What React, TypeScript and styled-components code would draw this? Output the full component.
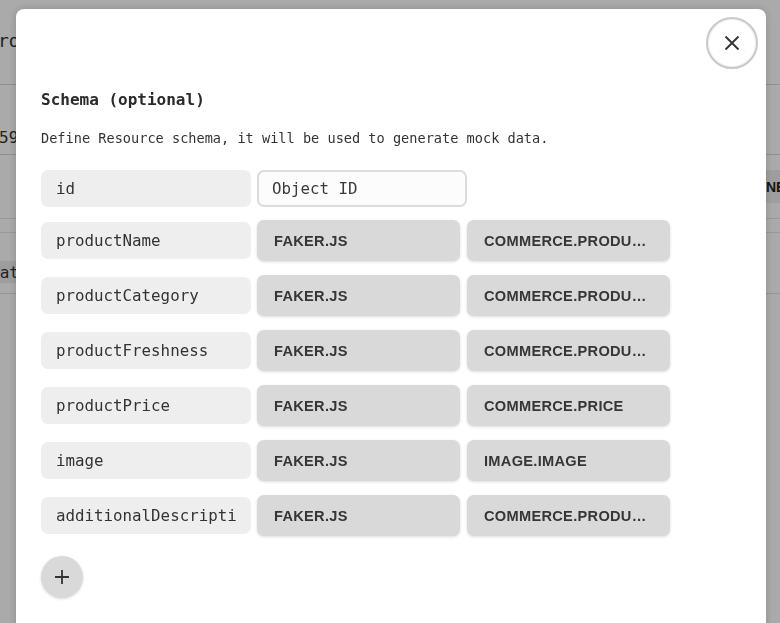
import React from "react";
import styled, { createGlobalStyle } from "styled-components";

const Global = createGlobalStyle`
  html, body { margin: 0; padding: 0; overflow: hidden; background: #fff; }
  body { font-family: "Liberation Sans", Arial, sans-serif; }
  * { box-sizing: border-box; }
`;

const mono = `"DejaVu Sans Mono", "Liberation Mono", monospace`;

/* ---------- background page ---------- */
const BgPage = styled.div`
  width: 780px;
  height: 623px;
  display: flex;
  flex-direction: column;
  background: #fff;
  overflow: hidden;
`;

const BgHeader = styled.div`
  height: 85px;
  border-bottom: 1px solid #d6d6d6;
  display: flex;
  align-items: center;
  font-family: ${mono};
  font-size: 18px;
  color: #333;
  padding-bottom: 4px;
  margin-left: -2px;
`;

const BgIdRow = styled.div`
  height: 70px;
  border-bottom: 1px solid #d6d6d6;
  display: flex;
  align-items: flex-end;
  padding-bottom: 7px;
  font-family: ${mono};
  font-size: 16px;
  color: #333;
  margin-left: -1px;
`;

const Red = styled.span`
  color: #a33;
`;

const BgToolbar = styled.div`
  height: 64px;
  border-bottom: 1px solid #e4e4e4;
  display: grid;
  grid-template-columns: 760px 1fr;
  align-items: center;
`;

const BgNewBtn = styled.div`
  height: 33px;
  background: #eee;
  display: flex;
  align-items: center;
  padding-left: 6px;
  font-weight: 700;
  font-size: 14px;
  color: #222;
  white-space: nowrap;
`;

const BgTabs = styled.div`
  height: 14px;
  border-bottom: 1px solid #e4e4e4;
`;

const BgDataRow = styled.div`
  margin-top: 28px;
  height: 22px;
  width: 40px;
  background: #ececec;
  display: flex;
  align-items: center;
  font-family: ${mono};
  font-size: 16px;
  color: #333;
  margin-left: -10px;
`;

const BgLine = styled.div`
  margin-top: 10px;
  height: 1px;
  background: #e0e0e0;
`;

/* ---------- overlay + modal ---------- */
const Overlay = styled.div`
  position: fixed;
  inset: 0;
  background: rgba(0, 0, 0, 0.335);
`;

const Modal = styled.div`
  position: absolute;
  top: 9px;
  left: 16px;
  width: 750px;
  height: 700px;
  background: #fff;
  border-radius: 8px;
  box-shadow: 0 0 8px rgba(0, 0, 0, 0.18);
  padding: 81px 25px 0 25px;
`;

const CloseButton = styled.button`
  position: absolute;
  top: 8px;
  right: 8px;
  width: 52px;
  height: 52px;
  border-radius: 50%;
  border: 2px solid #c9c9c9;
  box-shadow: inset 0 0 0 1px #f0f0f0;
  background: #fff;
  display: flex;
  align-items: center;
  justify-content: center;
  padding: 0;
  cursor: pointer;
`;

const Title = styled.h2`
  margin: 0;
  font-family: ${mono};
  font-size: 16px;
  font-weight: 700;
  line-height: 20px;
  color: #2a2a2a;
`;

const Description = styled.p`
  margin: 18px 0 0 0;
  font-family: ${mono};
  font-size: 13.6px;
  line-height: 20px;
  color: #333;
`;

const Rows = styled.div`
  margin-top: 22px;
  display: flex;
  flex-direction: column;
  gap: 14px;
`;

const Row = styled.div<{ $first?: boolean }>`
  display: flex;
  align-items: center;
  gap: 6px;
  height: ${(p) => (p.$first ? "37px" : "41px")};
  margin-bottom: ${(p) => (p.$first ? "-1px" : "0")};
`;

const NameField = styled.input`
  width: 210px;
  height: 37px;
  border: none;
  outline: none;
  border-radius: 7px;
  background: #eeeeee;
  padding: 0 14px 0 15px;
  font-family: ${mono};
  font-size: 15.8px;
  color: #333;
`;

const TypeField = styled.input`
  width: 210px;
  height: 37px;
  border: 2px solid #dcdcdc;
  outline: none;
  border-radius: 7px;
  background: #fcfcfc;
  padding: 0 12px 0 13px;
  font-family: ${mono};
  font-size: 15.8px;
  color: #3a3a3a;
`;

const PickButton = styled.button<{ $gapLeft?: boolean }>`
  width: 203px;
  height: 41px;
  border: none;
  border-radius: 7px;
  background: #d9d9d9;
  box-shadow: 0 1px 3px rgba(0, 0, 0, 0.14);
  padding: 0 17px;
  margin-left: ${(p) => (p.$gapLeft ? "1px" : "0")};
  font-family: "Liberation Sans", Arial, sans-serif;
  font-weight: 700;
  font-size: 14.6px;
  letter-spacing: 0.3px;
  color: #363636;
  text-align: left;
  text-transform: uppercase;
  white-space: nowrap;
  overflow: hidden;
  text-overflow: ellipsis;
  cursor: pointer;
`;

const AddButton = styled.button`
  margin-top: 20px;
  width: 42px;
  height: 42px;
  border-radius: 50%;
  border: none;
  background: #d9d9d9;
  box-shadow: 0 1px 3px rgba(0, 0, 0, 0.15);
  display: flex;
  align-items: center;
  justify-content: center;
  padding: 0;
  cursor: pointer;
`;

const fields = [
  { name: "productName", method: "commerce.productName" },
  { name: "productCategory", method: "commerce.productAdjective" },
  { name: "productFreshness", method: "commerce.productMaterial" },
  { name: "productPrice", method: "commerce.price" },
  { name: "image", method: "image.image" },
  { name: "additionalDescription", method: "commerce.productDescription" },
];

export default function App() {
  return (
    <>
      <Global />
      <BgPage>
        <BgHeader>roject</BgHeader>
        <BgIdRow>
          59<Red>c</Red>
        </BgIdRow>
        <BgToolbar>
          <span />
          <BgNewBtn>NEW RESOURCE</BgNewBtn>
        </BgToolbar>
        <BgTabs />
        <BgDataRow>data</BgDataRow>
        <BgLine />
      </BgPage>
      <Overlay>
        <Modal>
          <CloseButton aria-label="Close">
            <svg width="16" height="16" viewBox="0 0 16 16">
              <path
                d="M1.5 1.5 L14.5 14.5 M14.5 1.5 L1.5 14.5"
                stroke="#333"
                strokeWidth="1.9"
                strokeLinecap="butt"
                fill="none"
              />
            </svg>
          </CloseButton>
          <Title>Schema (optional)</Title>
          <Description>
            Define Resource schema, it will be used to generate mock data.
          </Description>
          <Rows>
            <Row $first>
              <NameField readOnly value="id" />
              <TypeField readOnly value="Object ID" />
            </Row>
            {fields.map((f) => (
              <Row key={f.name}>
                <NameField readOnly value={f.name} />
                <PickButton>faker.js</PickButton>
                <PickButton $gapLeft>{f.method}</PickButton>
              </Row>
            ))}
          </Rows>
          <AddButton aria-label="Add field">
            <svg width="16" height="16" viewBox="0 0 16 16">
              <path
                d="M8 1 V15 M1 8 H15"
                stroke="#333"
                strokeWidth="1.8"
                fill="none"
              />
            </svg>
          </AddButton>
        </Modal>
      </Overlay>
    </>
  );
}
